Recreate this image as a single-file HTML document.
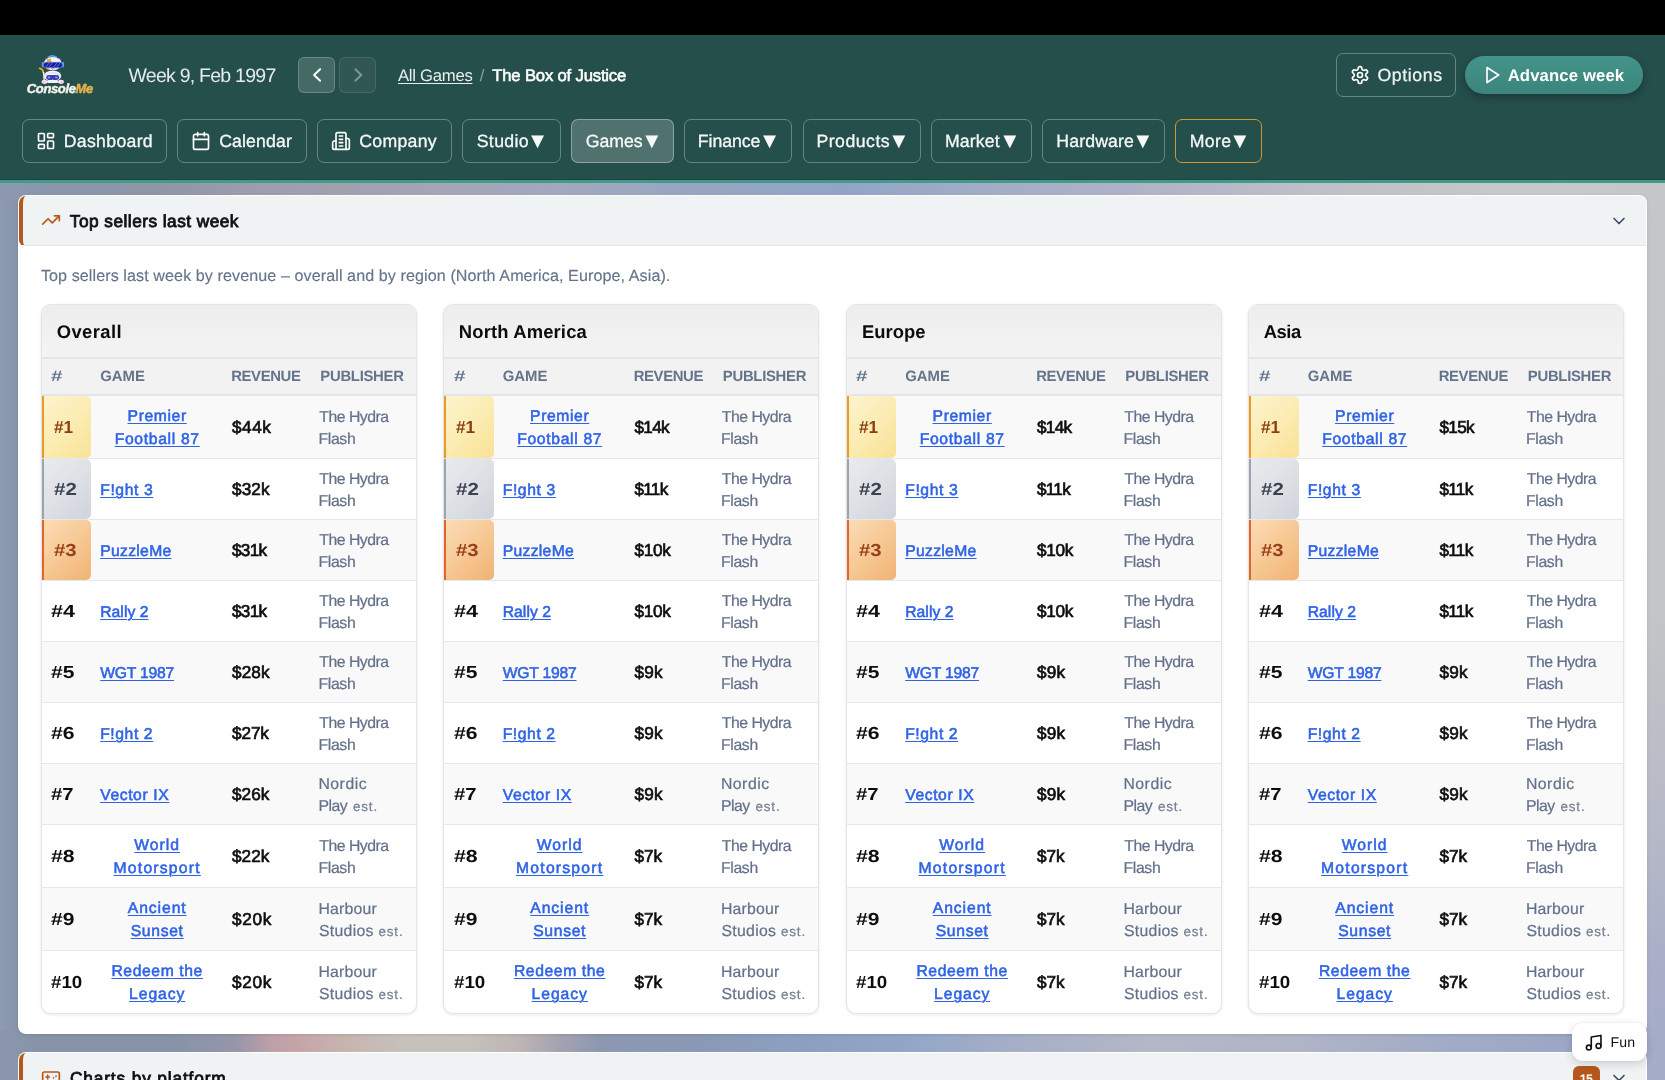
<!DOCTYPE html>
<html lang="en">
<head>
<meta charset="utf-8">
<title>ConsoleMe – Top sellers</title>
<style>
*{box-sizing:border-box}
html,body{margin:0;padding:0}
body{width:1665px;height:1080px;overflow:hidden;position:relative;font-family:"Liberation Sans",sans-serif;color:#111;background:#8d98ae;text-rendering:geometricPrecision}
.bg{position:absolute;left:0;top:0;width:1665px;height:1080px;
 background:
  linear-gradient(90deg,#8d9bb3 0,#8a97ad 8px,#8793a8 18px) 0 200px/18px 830px no-repeat,
  linear-gradient(180deg,#c5c6c7 0,#c4c5c7 420px,#b6b9c7 640px,#a8aec8 780px,#a5acc8 900px) 1647px 190px/18px 890px no-repeat,
  linear-gradient(90deg,#8c99b0 0,#8a96ab 40px,#8f96a7 160px,#9d9dad 260px,#a2a0af 340px,#a4a5b7 450px,#a2a8bd 560px,#97a5c2 700px,#93a5c6 850px,#a4adc6 1000px,#b1b3c6 1150px,#c0c1c8 1330px,#c6c7c8 1500px,#c5c6c7 1665px) 0 0/1665px 600px no-repeat,
  linear-gradient(90deg,#8996ad 0,#8693a8 40px,#8693a8 170px,#9596a9 235px,#bfa0a8 272px,#c6a5a9 300px,#c7b3ae 340px,#c6c1ba 400px,#c5c1bb 470px,#bdb5b4 520px,#a4a2b1 560px,#8c98b0 600px,#8a99b5 700px,#8d9fc0 800px,#92a5c7 900px,#a6afc7 1020px,#b4b7c6 1150px,#afb4c6 1300px,#a2abc6 1450px,#9ba7c5 1560px,#a4acc8 1665px) 0 600px/1665px 480px no-repeat}
.page{position:absolute;left:0;top:0;width:1665px;height:1080px;overflow:hidden;will-change:transform;transform:translateZ(0)}
.blackbar{position:absolute;left:0;top:0;width:1665px;height:35px;background:#000}
header{position:absolute;left:0;top:35px;width:1665px;height:148px;background:#254f4b;border-bottom:3px solid #419a8a;color:#fff;box-shadow:inset 0 -1px 0 rgba(0,0,0,.14)}
.abs{position:absolute;white-space:nowrap;line-height:20px}
.logo{position:absolute;left:0;top:0;width:120px;height:70px}
.logo svg{position:absolute}
.word{font-weight:700;font-style:italic;color:#f6f3ec;-webkit-text-stroke:.45px currentColor}
.word b{color:#e6b24c;font-weight:700}
.week{color:#e6ecec}
.nb{position:absolute;top:22px;width:37px;height:36px;border-radius:6px;border:1px solid rgba(255,255,255,.2);background:rgba(255,255,255,.15)}
.nb svg{position:absolute;left:6.6px;top:5.8px}
.nb.p{left:298px}
.nb.n{left:339px;background:rgba(255,255,255,.05);border-color:rgba(255,255,255,.1)}
.crumb a{text-decoration:underline;text-decoration-thickness:1px;text-underline-offset:2px;color:#e9eeed}
.sl{color:#8aa4a1}
.sb{-webkit-text-stroke:.55px currentColor}
.opt{position:absolute;left:1336px;top:18px;width:120px;height:44px;border:1px solid rgba(255,255,255,.3);border-radius:7px;color:#eef3f2}
.adv{position:absolute;left:1465px;top:21px;width:178px;height:38px;border-radius:19px;background:linear-gradient(180deg,#44938a,#3b857b);box-shadow:0 3px 8px rgba(0,0,0,.3);font-weight:700;color:#fff}
.navb{position:absolute;top:84px;height:44px;border:1px solid rgba(255,255,255,.3);border-radius:7px;color:#f6f9f8}
.navb.act{background:rgba(255,255,255,.2);border-color:rgba(255,255,255,.35)}
.navb.more{border-color:#cf9830}
.navb svg,.opt svg,.adv svg{position:absolute}
.nt{-webkit-text-stroke:.3px currentColor}
.tri{font-family:"Liberation Sans",sans-serif;line-height:0;letter-spacing:0;-webkit-text-stroke:0;position:relative;top:1px}
.card{position:absolute;left:18px;top:195px;width:1629px;height:839px;background:#fff;border:1px solid rgba(255,255,255,.8);border-radius:8px;box-shadow:0 1px 3px rgba(0,0,0,.10)}
.shead{position:absolute;left:0;top:0;width:1627px;height:50px;background:#f0f3f4;border-left:4px solid #b4591a;border-radius:7px 7px 0 6px;border-bottom:1px solid #e4e7ea}
.h2{margin:0;font-weight:400;color:#0d0f13;-webkit-text-stroke:.8px #0d0f13}
.desc{margin:0;color:#64748b;-webkit-text-stroke:.15px #64748b}
.tcard{position:absolute;top:108px;width:376px;height:710px;background:#fff;border:1px solid #e3e5ea;border-radius:10px;overflow:hidden;box-shadow:0 1px 3px rgba(16,24,40,.10)}
.tcard h3{margin:0;height:54px;position:relative;font-weight:700;background:linear-gradient(180deg,#ededed,#f4f4f4);border-bottom:2px solid #e4e6ea;color:#0b0c0f}
table{border-collapse:separate;border-spacing:0;width:374px;table-layout:fixed}
th{height:37px;background:#f2f2f2;font-weight:700;color:#64748b;text-align:left;padding:0;border-bottom:2px solid #e4e5ea;white-space:nowrap;position:relative}
td{height:61px;padding:0;border-bottom:1px solid #e5e7eb;vertical-align:top;position:relative;white-space:nowrap}
tr.two td{height:63px}
tbody tr:nth-child(odd) td{background:#f9f9fa}
tbody tr:last-child td{border-bottom:0;height:62px}
.c1{width:50px}
.c2{width:132px}
.c3{width:87px}
td.c1{font-weight:700;color:#0d0d0f}
td.c1 i{font-style:normal;display:block;transform-origin:0 50%}
td.c2{color:#2f63e6}
td.c2 a,td.c2 a span{text-decoration:underline;text-decoration-thickness:1.2px;text-underline-offset:2.2px;-webkit-text-stroke:.55px #2f63e6}
td.c2 a:not(.abs){text-decoration:none}

td.c3{font-weight:400;color:#0c0c0e;-webkit-text-stroke:.65px #0c0c0e}
td.c4{color:#64718a;-webkit-text-stroke:.22px #64718a}
td.c4 small{color:#7d8799}

tr.top td.c1 span{position:absolute;left:0;top:0;width:49.5px;height:100%;border-left:2.4px solid;border-radius:0 5px 5px 0}

tr.t1 td.c1 span{background:linear-gradient(135deg,#fdf4cd 0%,#fbebb0 55%,#fae196 100%);border-color:#eb9a28}
tr.t1 td.c1{color:#893d10}
tr.t2 td.c1 span{background:linear-gradient(135deg,#e9ebee 0%,#dcdfe4 55%,#d0d4db 100%);border-color:#9ca3af}
tr.t2 td.c1{color:#3b4350}
tr.t3 td.c1 span{background:linear-gradient(135deg,#fcdcb6 0%,#f6c690 55%,#f1b274 100%);border-color:#e2652c}
tr.t3 td.c1{color:#98401b}
.card2{position:absolute;left:18px;top:1052px;width:1629px;height:60px;background:#fff;border:1px solid rgba(255,255,255,.8);border-radius:8px}
.card2 .shead{border-radius:7px 7px 0 6px}
.badge{position:absolute;left:1573px;top:1066px;width:27px;height:25px;border-radius:6px;background:#b5581d;color:#fff;font-weight:700}
.fun{position:absolute;left:1572px;top:1023px;width:74.6px;height:38px;border-radius:11px;background:#fff;box-shadow:0 3px 10px rgba(15,23,42,.16),0 0 2px rgba(15,23,42,.08);color:#111}
.fun svg{position:absolute;left:12.3px;top:9.6px}
</style>
</head>
<body>
<div class="page">
<div class="bg"></div>
<div class="blackbar"></div>
<header>
<div class="logo">
<svg width="34" height="34" viewBox="36 53 34 34" style="left:36px;top:18px">
<path d="M48.3 57.3 Q52.3 54.4 56.3 57.3" fill="none" stroke="#4aa8ec" stroke-width="1.7" stroke-linecap="round"/>
<path d="M44.9 62.5 L45.2 57.6 L49.2 59.2z" fill="#7b55cc"/>
<path d="M60.9 62.5 L60.6 57.6 L56.6 59.2z" fill="#7b55cc"/>
<ellipse cx="52.8" cy="63.6" rx="9" ry="6.6" fill="#f7f5fc"/>
<path d="M46.6 59.6 L50.6 58.6 L51.4 61.9 L47 62.4z" fill="#f4a126"/>
<rect x="41.8" y="62" width="2.4" height="5.4" rx="1.1" fill="#58a4ea"/>
<rect x="61.6" y="62" width="2.4" height="5.4" rx="1.1" fill="#58a4ea"/>
<rect x="43.4" y="62.3" width="19" height="5.5" rx="2.6" fill="#1c1d96" stroke="#5d7fe6" stroke-width=".7"/>
<path d="M46.2 66.6 l2.6-3.2 M49.4 66.6 l2.6-3.2 M54 66.6 l2.6-3.2 M57.2 66.6 l2.6-3.2" stroke="#7478e8" stroke-width=".9" stroke-linecap="round"/>
<path d="M45.6 68.3 q1.8 1.8 3.4 .9 l-.4-1z" fill="#f4a126"/>
<path d="M51.5 68.2 l1.3 1.3 l1.3-1.3" fill="none" stroke="#2a2c7c" stroke-width=".6"/>
<path d="M39.6 68.3 Q42.6 68.6 43.4 72.2" fill="none" stroke="#f5a21f" stroke-width="1.7" stroke-linecap="round"/>
<path d="M43.5 72.4 Q44 76 44.2 79.4" fill="none" stroke="#f3f0fa" stroke-width="1.5" stroke-linecap="round"/>
<ellipse cx="52.6" cy="76" rx="8.6" ry="5.6" fill="#f5f3fb"/>
<path d="M44.6 75.5 q8-6 16 0" fill="none" stroke="#c9c6ea" stroke-width=".6"/>
<rect x="46.2" y="75" width="13" height="4.9" rx="2.3" fill="#3c40b2"/>
<circle cx="49" cy="77.4" r="1.1" fill="#8f93ea"/><circle cx="56.4" cy="77.4" r="1.1" fill="#8f93ea"/>
<path d="M51.6 80.2 q1.1-1.2 2.2 0z" fill="#f5f3fb"/>
<ellipse cx="44.5" cy="81.8" rx="2.9" ry="2.1" fill="#f8e4f0"/>
<ellipse cx="61" cy="81.8" rx="2.9" ry="2.1" fill="#f8e4f0"/>
<circle cx="43.9" cy="82" r=".8" fill="#f08fbb"/><circle cx="61.6" cy="82" r=".8" fill="#f08fbb"/>
<rect x="47" y="80.4" width="11.4" height="2.6" rx="1.3" fill="#f5f3fb"/>
</svg>

<span class="abs word" style="left:26.75px;top:44px;font-size:13.0px;letter-spacing:-0.35px">Console<b>Me</b></span>
</div>
<span class="abs week" style="left:128.5px;top:31px;font-size:19.5px;letter-spacing:-0.75px;">Week 9, Feb 1997</span>
<div class="nb p"><svg width="22" height="22" viewBox="0 0 22 22" fill="none" stroke="#fff" stroke-width="2" stroke-linecap="round" stroke-linejoin="round"><path d="M14.1 5.3 L8.1 11 L14.1 16.7"/></svg></div>
<div class="nb n"><svg width="22" height="22" viewBox="0 0 22 22" fill="none" stroke="#7c9996" stroke-width="1.9" stroke-linecap="round" stroke-linejoin="round"><path d="M8.3 5.3 L14.3 11 L8.3 16.7"/></svg></div>
<nav class="crumb">
<a class="abs" style="left:398px;top:31px;font-size:16.7px;letter-spacing:-0.28px;">All Games</a>
<span class="abs sl" style="left:479.8px;top:31px;font-size:16.7px;">/</span>
<b class="abs sb" style="left:492.28px;top:31px;font-size:16.7px;letter-spacing:-0.19px;font-weight:400;">The Box of Justice</b>
</nav>
<div class="opt">
<svg style="left:13px;top:11px" width="20" height="20" viewBox="0 0 24 24" fill="none" stroke="#fff" stroke-width="2" stroke-linecap="round" stroke-linejoin="round"><path d="M12.22 2h-.44a2 2 0 0 0-2 2v.18a2 2 0 0 1-1 1.73l-.43.25a2 2 0 0 1-2 0l-.15-.08a2 2 0 0 0-2.73.73l-.22.38a2 2 0 0 0 .73 2.73l.15.1a2 2 0 0 1 1 1.72v.51a2 2 0 0 1-1 1.74l-.15.09a2 2 0 0 0-.73 2.73l.22.38a2 2 0 0 0 2.73.73l.15-.08a2 2 0 0 1 2 0l.43.25a2 2 0 0 1 1 1.73V20a2 2 0 0 0 2 2h.44a2 2 0 0 0 2-2v-.18a2 2 0 0 1 1-1.73l.43-.25a2 2 0 0 1 2 0l.15.08a2 2 0 0 0 2.73-.73l.22-.39a2 2 0 0 0-.73-2.73l-.15-.08a2 2 0 0 1-1-1.74v-.5a2 2 0 0 1 1-1.74l.15-.09a2 2 0 0 0 .73-2.73l-.22-.38a2 2 0 0 0-2.73-.73l-.15.08a2 2 0 0 1-2 0l-.43-.25a2 2 0 0 1-1-1.73V4a2 2 0 0 0-2-2z"/><circle cx="12" cy="12" r="3"/></svg>
<span class="abs nt" style="left:40.4px;top:11px;font-size:17.7px;letter-spacing:0.61px;">Options</span>
</div>
<div class="adv">
<svg style="left:17.4px;top:8.8px" width="20" height="20" viewBox="0 0 24 24" fill="none" stroke="#fff" stroke-width="2" stroke-linecap="round" stroke-linejoin="round"><path d="M6 3l14 9-14 9z"/></svg>
<span class="abs" style="left:42.68px;top:10px;font-size:16.7px;letter-spacing:0.13px;">Advance week</span>
</div>
<div class="nav">
<div class="navb" style="left:22px;width:145px">
<svg style="left:13.3px;top:10.8px" width="20" height="20" viewBox="0 0 24 24" fill="none" stroke="#fff" stroke-width="2" stroke-linecap="round" stroke-linejoin="round"><rect x="3" y="3" width="7" height="9" rx="1"/><rect x="14" y="3" width="7" height="5" rx="1"/><rect x="14" y="12" width="7" height="9" rx="1"/><rect x="3" y="16" width="7" height="5" rx="1"/></svg>
<span class="abs nt" style="left:40.78px;top:11px;font-size:17.7px;letter-spacing:0.3px;">Dashboard</span>
</div>
<div class="navb" style="left:177px;width:130px">
<svg style="left:13.3px;top:10.8px" width="20" height="20" viewBox="0 0 24 24" fill="none" stroke="#fff" stroke-width="2" stroke-linecap="round" stroke-linejoin="round"><path d="M8 2v4M16 2v4M3 10h18"/><rect x="3" y="4" width="18" height="18" rx="2"/></svg>
<span class="abs nt" style="left:41.22px;top:11px;font-size:17.7px;letter-spacing:0.11px;">Calendar</span>
</div>
<div class="navb" style="left:317px;width:135px">
<svg style="left:13.3px;top:10.8px" width="20" height="20" viewBox="0 0 24 24" fill="none" stroke="#fff" stroke-width="2" stroke-linecap="round" stroke-linejoin="round"><path d="M6 22V4a2 2 0 0 1 2-2h8a2 2 0 0 1 2 2v18z"/><path d="M6 12H4a2 2 0 0 0-2 2v6a2 2 0 0 0 2 2h2M18 9h2a2 2 0 0 1 2 2v9a2 2 0 0 1-2 2h-2M10 6h4M10 10h4M10 14h4M10 18h4"/></svg>
<span class="abs nt" style="left:41.22px;top:11px;font-size:17.7px;letter-spacing:0.29px;">Company</span>
</div>
<div class="navb" style="left:462px;width:99px">
<span class="abs nt" style="left:13.7px;top:11px;font-size:17.7px;letter-spacing:0.37px;">Studio<span class="tri" style="font-size:21.8px;margin-left:-2.25px">▼</span></span>
</div>
<div class="navb act" style="left:571px;width:103px">
<span class="abs nt" style="left:13.72px;top:11px;font-size:17.7px;letter-spacing:-0.02px;">Games<span class="tri" style="font-size:21.8px;margin-left:-1.74px">▼</span></span>
</div>
<div class="navb" style="left:684px;width:108px">
<span class="abs nt" style="left:12.78px;top:11px;font-size:17.7px;letter-spacing:-0.04px;">Finance<span class="tri" style="font-size:21.8px;margin-left:-1.78px">▼</span></span>
</div>
<div class="navb" style="left:803px;width:118px">
<span class="abs nt" style="left:12.38px;top:11px;font-size:17.7px;letter-spacing:0.5px;">Products<span class="tri" style="font-size:21.8px;margin-left:-2.31px">▼</span></span>
</div>
<div class="navb" style="left:931px;width:101px">
<span class="abs nt" style="left:12.98px;top:11px;font-size:17.7px;letter-spacing:0.13px;">Market<span class="tri" style="font-size:21.8px;margin-left:-0.91px">▼</span></span>
</div>
<div class="navb" style="left:1042px;width:123px">
<span class="abs nt" style="left:13.28px;top:11px;font-size:17.7px;letter-spacing:0.14px;">Hardware<span class="tri" style="font-size:21.8px;margin-left:-2.01px">▼</span></span>
</div>
<div class="navb more" style="left:1175px;width:87px">
<span class="abs nt" style="left:13.78px;top:11px;font-size:17.7px;letter-spacing:0.32px;">More<span class="tri" style="font-size:21.8px;margin-left:-2.34px">▼</span></span>
</div>
</div>
</header>
<main class="card">
<div class="shead">
<svg class="abs" style="left:17.9px;top:14px" width="20" height="20" viewBox="0 0 24 24" fill="none" stroke="#b4591a" stroke-width="2" stroke-linecap="round" stroke-linejoin="round"><path d="M22 7l-8.5 8.5-5-5L2 17"/><path d="M16 7h6v6"/></svg>
<h2 class="abs h2" style="left:46.87px;top:15px;font-size:17.3px;letter-spacing:0.46px;">Top sellers last week</h2>
<svg class="abs" style="left:1586px;top:14.6px" width="20" height="20" viewBox="0 0 24 24" fill="none" stroke="#3f4a63" stroke-width="2" stroke-linecap="round" stroke-linejoin="round"><path d="M6 9l6 6 6-6"/></svg>
</div>
<p class="abs desc" style="left:21.9px;top:70px;font-size:16.1px;letter-spacing:0.09px;">Top sellers last week by revenue – overall and by region (North America, Europe, Asia).</p>
<section class="tcard" style="left:21.8px">
<h3><span class="abs" style="left:14.96px;top:17px;font-size:18.4px;letter-spacing:0.41px;">Overall</span></h3>
<table><thead><tr>
<th class="c1"><span class="abs" style="left:9.58px;top:8px;font-size:14.9px;transform:scaleX(1.38);transform-origin:0 50%;">#</span></th>
<th class="c2"><span class="abs" style="left:8.5px;top:8px;font-size:14.9px;letter-spacing:-0.03px;">GAME</span></th>
<th class="c3"><span class="abs" style="left:7.43px;top:8px;font-size:14.9px;letter-spacing:-0.39px;">REVENUE</span></th>
<th class="c4"><span class="abs" style="left:9.53px;top:8px;font-size:14.9px;letter-spacing:-0.3px;">PUBLISHER</span></th>
</tr></thead><tbody>
<tr class="two top t1">
<td class="c1"><span></span><i class="abs" style="left:12.04px;top:21px;font-size:17.5px;transform:scaleX(0.98);letter-spacing:0px">#1</i></td>
<td class="c2"><a><span class="abs" style="left:35.75px;top:11px;font-size:15.7px;letter-spacing:0.62px;">Premier</span> <span class="abs" style="left:22.9px;top:34px;font-size:15.7px;letter-spacing:0.67px;">Football 87</span></a></td>
<td class="c3"><span class="abs" style="left:8.23px;top:21px;font-size:17.2px;letter-spacing:0.52px;">$44k</span></td>
<td class="c4"><span class="abs" style="left:8.5px;top:12px;font-size:15.8px;letter-spacing:-0.5px;">The Hydra</span> <span class="abs" style="left:7.64px;top:34px;font-size:15.8px;letter-spacing:-0.34px;">Flash</span></td>
</tr>
<tr class="top t2">
<td class="c1"><span></span><i class="abs" style="left:11.99px;top:20px;font-size:17.5px;transform:scaleX(1.17);letter-spacing:0px">#2</i></td>
<td class="c2"><a class="abs" style="left:8.4px;top:22px;font-size:15.7px;letter-spacing:0.62px;">F!ght 3</a></td>
<td class="c3"><span class="abs" style="left:8.23px;top:20px;font-size:17.2px;letter-spacing:0.08px;">$32k</span></td>
<td class="c4"><span class="abs" style="left:8.5px;top:11px;font-size:15.8px;letter-spacing:-0.5px;">The Hydra</span> <span class="abs" style="left:7.64px;top:33px;font-size:15.8px;letter-spacing:-0.34px;">Flash</span></td>
</tr>
<tr class="top t3">
<td class="c1"><span></span><i class="abs" style="left:11.99px;top:20px;font-size:17.5px;transform:scaleX(1.16);letter-spacing:0px">#3</i></td>
<td class="c2"><a class="abs" style="left:8.4px;top:22px;font-size:15.7px;letter-spacing:0.31px;">PuzzleMe</a></td>
<td class="c3"><span class="abs" style="left:8.23px;top:20px;font-size:17.2px;letter-spacing:-0.75px;">$31k</span></td>
<td class="c4"><span class="abs" style="left:8.5px;top:11px;font-size:15.8px;letter-spacing:-0.5px;">The Hydra</span> <span class="abs" style="left:7.64px;top:33px;font-size:15.8px;letter-spacing:-0.34px;">Flash</span></td>
</tr>
<tr>
<td class="c1"><i class="abs" style="left:9.48px;top:20px;font-size:17.5px;transform:scaleX(1.23);letter-spacing:0px">#4</i></td>
<td class="c2"><a class="abs" style="left:8.4px;top:22px;font-size:15.7px;letter-spacing:0.06px;">Rally 2</a></td>
<td class="c3"><span class="abs" style="left:8.23px;top:20px;font-size:17.2px;letter-spacing:-0.75px;">$31k</span></td>
<td class="c4"><span class="abs" style="left:8.5px;top:11px;font-size:15.8px;letter-spacing:-0.5px;">The Hydra</span> <span class="abs" style="left:7.64px;top:33px;font-size:15.8px;letter-spacing:-0.34px;">Flash</span></td>
</tr>
<tr>
<td class="c1"><i class="abs" style="left:9.49px;top:20px;font-size:17.5px;transform:scaleX(1.2);letter-spacing:0px">#5</i></td>
<td class="c2"><a class="abs" style="left:8.4px;top:22px;font-size:15.7px;letter-spacing:-0.22px;">WGT 1987</a></td>
<td class="c3"><span class="abs" style="left:8.23px;top:20px;font-size:17.2px;letter-spacing:0.12px;">$28k</span></td>
<td class="c4"><span class="abs" style="left:8.5px;top:11px;font-size:15.8px;letter-spacing:-0.5px;">The Hydra</span> <span class="abs" style="left:7.64px;top:33px;font-size:15.8px;letter-spacing:-0.34px;">Flash</span></td>
</tr>
<tr>
<td class="c1"><i class="abs" style="left:9.48px;top:20px;font-size:17.5px;transform:scaleX(1.21);letter-spacing:0px">#6</i></td>
<td class="c2"><a class="abs" style="left:8.4px;top:22px;font-size:15.7px;letter-spacing:0.59px;">F!ght 2</a></td>
<td class="c3"><span class="abs" style="left:8.23px;top:20px;font-size:17.2px;letter-spacing:-0.12px;">$27k</span></td>
<td class="c4"><span class="abs" style="left:8.5px;top:11px;font-size:15.8px;letter-spacing:-0.5px;">The Hydra</span> <span class="abs" style="left:7.64px;top:33px;font-size:15.8px;letter-spacing:-0.34px;">Flash</span></td>
</tr>
<tr>
<td class="c1"><i class="abs" style="left:9.49px;top:20px;font-size:17.5px;transform:scaleX(1.16);letter-spacing:0px">#7</i></td>
<td class="c2"><a class="abs" style="left:8.4px;top:22px;font-size:15.7px;letter-spacing:0.6px;">Vector IX</a></td>
<td class="c3"><span class="abs" style="left:8.23px;top:20px;font-size:17.2px;letter-spacing:0.02px;">$26k</span></td>
<td class="c4"><span class="abs" style="left:7.64px;top:11px;font-size:15.8px;letter-spacing:0.5px;">Nordic</span> <span class="abs" style="left:7.64px;top:33px;font-size:15.8px;letter-spacing:-0.5px;">Play</span> <small class="abs" style="left:42.1px;top:33px;font-size:13.4px;letter-spacing:0.88px;">est.</small></td>
</tr>
<tr class="two">
<td class="c1"><i class="abs" style="left:9.48px;top:21px;font-size:17.5px;transform:scaleX(1.22);letter-spacing:0px">#8</i></td>
<td class="c2"><a><span class="abs" style="left:42.55px;top:11px;font-size:15.7px;letter-spacing:1px;">World</span> <span class="abs" style="left:21.75px;top:34px;font-size:15.7px;letter-spacing:1.23px;">Motorsport</span></a></td>
<td class="c3"><span class="abs" style="left:8.23px;top:21px;font-size:17.2px;letter-spacing:0.02px;">$22k</span></td>
<td class="c4"><span class="abs" style="left:8.5px;top:12px;font-size:15.8px;letter-spacing:-0.5px;">The Hydra</span> <span class="abs" style="left:7.64px;top:34px;font-size:15.8px;letter-spacing:-0.34px;">Flash</span></td>
</tr>
<tr class="two">
<td class="c1"><i class="abs" style="left:9.49px;top:21px;font-size:17.5px;transform:scaleX(1.2);letter-spacing:0px">#9</i></td>
<td class="c2"><a><span class="abs" style="left:36px;top:11px;font-size:15.7px;letter-spacing:0.92px;">Ancient</span> <span class="abs" style="left:38.9px;top:34px;font-size:15.7px;letter-spacing:0.69px;">Sunset</span></a></td>
<td class="c3"><span class="abs" style="left:8.23px;top:21px;font-size:17.2px;letter-spacing:0.65px;">$20k</span></td>
<td class="c4"><span class="abs" style="left:7.64px;top:12px;font-size:15.8px;letter-spacing:0.21px;">Harbour</span> <span class="abs" style="left:8.19px;top:34px;font-size:15.8px;letter-spacing:0.3px;">Studios</span> <small class="abs" style="left:67.6px;top:34px;font-size:13.4px;letter-spacing:0.88px;">est.</small></td>
</tr>
<tr class="two">
<td class="c1"><i class="abs" style="left:9.52px;top:21px;font-size:17.5px;transform:scaleX(1.07);letter-spacing:0px">#10</i></td>
<td class="c2"><a><span class="abs" style="left:19.6px;top:11px;font-size:15.7px;letter-spacing:0.61px;">Redeem the</span> <span class="abs" style="left:37.25px;top:34px;font-size:15.7px;letter-spacing:0.95px;">Legacy</span></a></td>
<td class="c3"><span class="abs" style="left:8.23px;top:21px;font-size:17.2px;letter-spacing:0.65px;">$20k</span></td>
<td class="c4"><span class="abs" style="left:7.64px;top:12px;font-size:15.8px;letter-spacing:0.21px;">Harbour</span> <span class="abs" style="left:8.19px;top:34px;font-size:15.8px;letter-spacing:0.3px;">Studios</span> <small class="abs" style="left:67.6px;top:34px;font-size:13.4px;letter-spacing:0.88px;">est.</small></td>
</tr>
</tbody></table></section>
<section class="tcard" style="left:424.3px">
<h3><span class="abs" style="left:14.5px;top:17px;font-size:18.4px;letter-spacing:0.16px;">North America</span></h3>
<table><thead><tr>
<th class="c1"><span class="abs" style="left:9.58px;top:8px;font-size:14.9px;transform:scaleX(1.38);transform-origin:0 50%;">#</span></th>
<th class="c2"><span class="abs" style="left:8.5px;top:8px;font-size:14.9px;letter-spacing:-0.03px;">GAME</span></th>
<th class="c3"><span class="abs" style="left:7.43px;top:8px;font-size:14.9px;letter-spacing:-0.39px;">REVENUE</span></th>
<th class="c4"><span class="abs" style="left:9.53px;top:8px;font-size:14.9px;letter-spacing:-0.3px;">PUBLISHER</span></th>
</tr></thead><tbody>
<tr class="two top t1">
<td class="c1"><span></span><i class="abs" style="left:12.04px;top:21px;font-size:17.5px;transform:scaleX(0.98);letter-spacing:0px">#1</i></td>
<td class="c2"><a><span class="abs" style="left:35.75px;top:11px;font-size:15.7px;letter-spacing:0.62px;">Premier</span> <span class="abs" style="left:22.9px;top:34px;font-size:15.7px;letter-spacing:0.67px;">Football 87</span></a></td>
<td class="c3"><span class="abs" style="left:8.23px;top:21px;font-size:17.2px;letter-spacing:-0.7px;">$14k</span></td>
<td class="c4"><span class="abs" style="left:8.5px;top:12px;font-size:15.8px;letter-spacing:-0.5px;">The Hydra</span> <span class="abs" style="left:7.64px;top:34px;font-size:15.8px;letter-spacing:-0.34px;">Flash</span></td>
</tr>
<tr class="top t2">
<td class="c1"><span></span><i class="abs" style="left:11.99px;top:20px;font-size:17.5px;transform:scaleX(1.17);letter-spacing:0px">#2</i></td>
<td class="c2"><a class="abs" style="left:8.4px;top:22px;font-size:15.7px;letter-spacing:0.62px;">F!ght 3</a></td>
<td class="c3"><span class="abs" style="left:8.23px;top:20px;font-size:17.2px;letter-spacing:-0.75px;">$11k</span></td>
<td class="c4"><span class="abs" style="left:8.5px;top:11px;font-size:15.8px;letter-spacing:-0.5px;">The Hydra</span> <span class="abs" style="left:7.64px;top:33px;font-size:15.8px;letter-spacing:-0.34px;">Flash</span></td>
</tr>
<tr class="top t3">
<td class="c1"><span></span><i class="abs" style="left:11.99px;top:20px;font-size:17.5px;transform:scaleX(1.16);letter-spacing:0px">#3</i></td>
<td class="c2"><a class="abs" style="left:8.4px;top:22px;font-size:15.7px;letter-spacing:0.31px;">PuzzleMe</a></td>
<td class="c3"><span class="abs" style="left:8.23px;top:20px;font-size:17.2px;letter-spacing:-0.32px;">$10k</span></td>
<td class="c4"><span class="abs" style="left:8.5px;top:11px;font-size:15.8px;letter-spacing:-0.5px;">The Hydra</span> <span class="abs" style="left:7.64px;top:33px;font-size:15.8px;letter-spacing:-0.34px;">Flash</span></td>
</tr>
<tr>
<td class="c1"><i class="abs" style="left:9.48px;top:20px;font-size:17.5px;transform:scaleX(1.23);letter-spacing:0px">#4</i></td>
<td class="c2"><a class="abs" style="left:8.4px;top:22px;font-size:15.7px;letter-spacing:0.06px;">Rally 2</a></td>
<td class="c3"><span class="abs" style="left:8.23px;top:20px;font-size:17.2px;letter-spacing:-0.32px;">$10k</span></td>
<td class="c4"><span class="abs" style="left:8.5px;top:11px;font-size:15.8px;letter-spacing:-0.5px;">The Hydra</span> <span class="abs" style="left:7.64px;top:33px;font-size:15.8px;letter-spacing:-0.34px;">Flash</span></td>
</tr>
<tr>
<td class="c1"><i class="abs" style="left:9.49px;top:20px;font-size:17.5px;transform:scaleX(1.2);letter-spacing:0px">#5</i></td>
<td class="c2"><a class="abs" style="left:8.4px;top:22px;font-size:15.7px;letter-spacing:-0.22px;">WGT 1987</a></td>
<td class="c3"><span class="abs" style="left:8.23px;top:20px;font-size:17.2px;letter-spacing:0.24px;">$9k</span></td>
<td class="c4"><span class="abs" style="left:8.5px;top:11px;font-size:15.8px;letter-spacing:-0.5px;">The Hydra</span> <span class="abs" style="left:7.64px;top:33px;font-size:15.8px;letter-spacing:-0.34px;">Flash</span></td>
</tr>
<tr>
<td class="c1"><i class="abs" style="left:9.48px;top:20px;font-size:17.5px;transform:scaleX(1.21);letter-spacing:0px">#6</i></td>
<td class="c2"><a class="abs" style="left:8.4px;top:22px;font-size:15.7px;letter-spacing:0.59px;">F!ght 2</a></td>
<td class="c3"><span class="abs" style="left:8.23px;top:20px;font-size:17.2px;letter-spacing:0.24px;">$9k</span></td>
<td class="c4"><span class="abs" style="left:8.5px;top:11px;font-size:15.8px;letter-spacing:-0.5px;">The Hydra</span> <span class="abs" style="left:7.64px;top:33px;font-size:15.8px;letter-spacing:-0.34px;">Flash</span></td>
</tr>
<tr>
<td class="c1"><i class="abs" style="left:9.49px;top:20px;font-size:17.5px;transform:scaleX(1.16);letter-spacing:0px">#7</i></td>
<td class="c2"><a class="abs" style="left:8.4px;top:22px;font-size:15.7px;letter-spacing:0.6px;">Vector IX</a></td>
<td class="c3"><span class="abs" style="left:8.23px;top:20px;font-size:17.2px;letter-spacing:0.24px;">$9k</span></td>
<td class="c4"><span class="abs" style="left:7.64px;top:11px;font-size:15.8px;letter-spacing:0.5px;">Nordic</span> <span class="abs" style="left:7.64px;top:33px;font-size:15.8px;letter-spacing:-0.5px;">Play</span> <small class="abs" style="left:42.1px;top:33px;font-size:13.4px;letter-spacing:0.88px;">est.</small></td>
</tr>
<tr class="two">
<td class="c1"><i class="abs" style="left:9.48px;top:21px;font-size:17.5px;transform:scaleX(1.22);letter-spacing:0px">#8</i></td>
<td class="c2"><a><span class="abs" style="left:42.55px;top:11px;font-size:15.7px;letter-spacing:1px;">World</span> <span class="abs" style="left:21.75px;top:34px;font-size:15.7px;letter-spacing:1.23px;">Motorsport</span></a></td>
<td class="c3"><span class="abs" style="left:8.23px;top:21px;font-size:17.2px;letter-spacing:-0.01px;">$7k</span></td>
<td class="c4"><span class="abs" style="left:8.5px;top:12px;font-size:15.8px;letter-spacing:-0.5px;">The Hydra</span> <span class="abs" style="left:7.64px;top:34px;font-size:15.8px;letter-spacing:-0.34px;">Flash</span></td>
</tr>
<tr class="two">
<td class="c1"><i class="abs" style="left:9.49px;top:21px;font-size:17.5px;transform:scaleX(1.2);letter-spacing:0px">#9</i></td>
<td class="c2"><a><span class="abs" style="left:36px;top:11px;font-size:15.7px;letter-spacing:0.92px;">Ancient</span> <span class="abs" style="left:38.9px;top:34px;font-size:15.7px;letter-spacing:0.69px;">Sunset</span></a></td>
<td class="c3"><span class="abs" style="left:8.23px;top:21px;font-size:17.2px;letter-spacing:-0.01px;">$7k</span></td>
<td class="c4"><span class="abs" style="left:7.64px;top:12px;font-size:15.8px;letter-spacing:0.21px;">Harbour</span> <span class="abs" style="left:8.19px;top:34px;font-size:15.8px;letter-spacing:0.3px;">Studios</span> <small class="abs" style="left:67.6px;top:34px;font-size:13.4px;letter-spacing:0.88px;">est.</small></td>
</tr>
<tr class="two">
<td class="c1"><i class="abs" style="left:9.52px;top:21px;font-size:17.5px;transform:scaleX(1.07);letter-spacing:0px">#10</i></td>
<td class="c2"><a><span class="abs" style="left:19.6px;top:11px;font-size:15.7px;letter-spacing:0.61px;">Redeem the</span> <span class="abs" style="left:37.25px;top:34px;font-size:15.7px;letter-spacing:0.95px;">Legacy</span></a></td>
<td class="c3"><span class="abs" style="left:8.23px;top:21px;font-size:17.2px;letter-spacing:-0.01px;">$7k</span></td>
<td class="c4"><span class="abs" style="left:7.64px;top:12px;font-size:15.8px;letter-spacing:0.21px;">Harbour</span> <span class="abs" style="left:8.19px;top:34px;font-size:15.8px;letter-spacing:0.3px;">Studios</span> <small class="abs" style="left:67.6px;top:34px;font-size:13.4px;letter-spacing:0.88px;">est.</small></td>
</tr>
</tbody></table></section>
<section class="tcard" style="left:826.8px">
<h3><span class="abs" style="left:15.1px;top:17px;font-size:18.4px;letter-spacing:0.07px;">Europe</span></h3>
<table><thead><tr>
<th class="c1"><span class="abs" style="left:9.58px;top:8px;font-size:14.9px;transform:scaleX(1.38);transform-origin:0 50%;">#</span></th>
<th class="c2"><span class="abs" style="left:8.5px;top:8px;font-size:14.9px;letter-spacing:-0.03px;">GAME</span></th>
<th class="c3"><span class="abs" style="left:7.43px;top:8px;font-size:14.9px;letter-spacing:-0.39px;">REVENUE</span></th>
<th class="c4"><span class="abs" style="left:9.53px;top:8px;font-size:14.9px;letter-spacing:-0.3px;">PUBLISHER</span></th>
</tr></thead><tbody>
<tr class="two top t1">
<td class="c1"><span></span><i class="abs" style="left:12.04px;top:21px;font-size:17.5px;transform:scaleX(0.98);letter-spacing:0px">#1</i></td>
<td class="c2"><a><span class="abs" style="left:35.75px;top:11px;font-size:15.7px;letter-spacing:0.62px;">Premier</span> <span class="abs" style="left:22.9px;top:34px;font-size:15.7px;letter-spacing:0.67px;">Football 87</span></a></td>
<td class="c3"><span class="abs" style="left:8.23px;top:21px;font-size:17.2px;letter-spacing:-0.7px;">$14k</span></td>
<td class="c4"><span class="abs" style="left:8.5px;top:12px;font-size:15.8px;letter-spacing:-0.5px;">The Hydra</span> <span class="abs" style="left:7.64px;top:34px;font-size:15.8px;letter-spacing:-0.34px;">Flash</span></td>
</tr>
<tr class="top t2">
<td class="c1"><span></span><i class="abs" style="left:11.99px;top:20px;font-size:17.5px;transform:scaleX(1.17);letter-spacing:0px">#2</i></td>
<td class="c2"><a class="abs" style="left:8.4px;top:22px;font-size:15.7px;letter-spacing:0.62px;">F!ght 3</a></td>
<td class="c3"><span class="abs" style="left:8.23px;top:20px;font-size:17.2px;letter-spacing:-0.75px;">$11k</span></td>
<td class="c4"><span class="abs" style="left:8.5px;top:11px;font-size:15.8px;letter-spacing:-0.5px;">The Hydra</span> <span class="abs" style="left:7.64px;top:33px;font-size:15.8px;letter-spacing:-0.34px;">Flash</span></td>
</tr>
<tr class="top t3">
<td class="c1"><span></span><i class="abs" style="left:11.99px;top:20px;font-size:17.5px;transform:scaleX(1.16);letter-spacing:0px">#3</i></td>
<td class="c2"><a class="abs" style="left:8.4px;top:22px;font-size:15.7px;letter-spacing:0.31px;">PuzzleMe</a></td>
<td class="c3"><span class="abs" style="left:8.23px;top:20px;font-size:17.2px;letter-spacing:-0.32px;">$10k</span></td>
<td class="c4"><span class="abs" style="left:8.5px;top:11px;font-size:15.8px;letter-spacing:-0.5px;">The Hydra</span> <span class="abs" style="left:7.64px;top:33px;font-size:15.8px;letter-spacing:-0.34px;">Flash</span></td>
</tr>
<tr>
<td class="c1"><i class="abs" style="left:9.48px;top:20px;font-size:17.5px;transform:scaleX(1.23);letter-spacing:0px">#4</i></td>
<td class="c2"><a class="abs" style="left:8.4px;top:22px;font-size:15.7px;letter-spacing:0.06px;">Rally 2</a></td>
<td class="c3"><span class="abs" style="left:8.23px;top:20px;font-size:17.2px;letter-spacing:-0.32px;">$10k</span></td>
<td class="c4"><span class="abs" style="left:8.5px;top:11px;font-size:15.8px;letter-spacing:-0.5px;">The Hydra</span> <span class="abs" style="left:7.64px;top:33px;font-size:15.8px;letter-spacing:-0.34px;">Flash</span></td>
</tr>
<tr>
<td class="c1"><i class="abs" style="left:9.49px;top:20px;font-size:17.5px;transform:scaleX(1.2);letter-spacing:0px">#5</i></td>
<td class="c2"><a class="abs" style="left:8.4px;top:22px;font-size:15.7px;letter-spacing:-0.22px;">WGT 1987</a></td>
<td class="c3"><span class="abs" style="left:8.23px;top:20px;font-size:17.2px;letter-spacing:0.24px;">$9k</span></td>
<td class="c4"><span class="abs" style="left:8.5px;top:11px;font-size:15.8px;letter-spacing:-0.5px;">The Hydra</span> <span class="abs" style="left:7.64px;top:33px;font-size:15.8px;letter-spacing:-0.34px;">Flash</span></td>
</tr>
<tr>
<td class="c1"><i class="abs" style="left:9.48px;top:20px;font-size:17.5px;transform:scaleX(1.21);letter-spacing:0px">#6</i></td>
<td class="c2"><a class="abs" style="left:8.4px;top:22px;font-size:15.7px;letter-spacing:0.59px;">F!ght 2</a></td>
<td class="c3"><span class="abs" style="left:8.23px;top:20px;font-size:17.2px;letter-spacing:0.24px;">$9k</span></td>
<td class="c4"><span class="abs" style="left:8.5px;top:11px;font-size:15.8px;letter-spacing:-0.5px;">The Hydra</span> <span class="abs" style="left:7.64px;top:33px;font-size:15.8px;letter-spacing:-0.34px;">Flash</span></td>
</tr>
<tr>
<td class="c1"><i class="abs" style="left:9.49px;top:20px;font-size:17.5px;transform:scaleX(1.16);letter-spacing:0px">#7</i></td>
<td class="c2"><a class="abs" style="left:8.4px;top:22px;font-size:15.7px;letter-spacing:0.6px;">Vector IX</a></td>
<td class="c3"><span class="abs" style="left:8.23px;top:20px;font-size:17.2px;letter-spacing:0.24px;">$9k</span></td>
<td class="c4"><span class="abs" style="left:7.64px;top:11px;font-size:15.8px;letter-spacing:0.5px;">Nordic</span> <span class="abs" style="left:7.64px;top:33px;font-size:15.8px;letter-spacing:-0.5px;">Play</span> <small class="abs" style="left:42.1px;top:33px;font-size:13.4px;letter-spacing:0.88px;">est.</small></td>
</tr>
<tr class="two">
<td class="c1"><i class="abs" style="left:9.48px;top:21px;font-size:17.5px;transform:scaleX(1.22);letter-spacing:0px">#8</i></td>
<td class="c2"><a><span class="abs" style="left:42.55px;top:11px;font-size:15.7px;letter-spacing:1px;">World</span> <span class="abs" style="left:21.75px;top:34px;font-size:15.7px;letter-spacing:1.23px;">Motorsport</span></a></td>
<td class="c3"><span class="abs" style="left:8.23px;top:21px;font-size:17.2px;letter-spacing:-0.01px;">$7k</span></td>
<td class="c4"><span class="abs" style="left:8.5px;top:12px;font-size:15.8px;letter-spacing:-0.5px;">The Hydra</span> <span class="abs" style="left:7.64px;top:34px;font-size:15.8px;letter-spacing:-0.34px;">Flash</span></td>
</tr>
<tr class="two">
<td class="c1"><i class="abs" style="left:9.49px;top:21px;font-size:17.5px;transform:scaleX(1.2);letter-spacing:0px">#9</i></td>
<td class="c2"><a><span class="abs" style="left:36px;top:11px;font-size:15.7px;letter-spacing:0.92px;">Ancient</span> <span class="abs" style="left:38.9px;top:34px;font-size:15.7px;letter-spacing:0.69px;">Sunset</span></a></td>
<td class="c3"><span class="abs" style="left:8.23px;top:21px;font-size:17.2px;letter-spacing:-0.01px;">$7k</span></td>
<td class="c4"><span class="abs" style="left:7.64px;top:12px;font-size:15.8px;letter-spacing:0.21px;">Harbour</span> <span class="abs" style="left:8.19px;top:34px;font-size:15.8px;letter-spacing:0.3px;">Studios</span> <small class="abs" style="left:67.6px;top:34px;font-size:13.4px;letter-spacing:0.88px;">est.</small></td>
</tr>
<tr class="two">
<td class="c1"><i class="abs" style="left:9.52px;top:21px;font-size:17.5px;transform:scaleX(1.07);letter-spacing:0px">#10</i></td>
<td class="c2"><a><span class="abs" style="left:19.6px;top:11px;font-size:15.7px;letter-spacing:0.61px;">Redeem the</span> <span class="abs" style="left:37.25px;top:34px;font-size:15.7px;letter-spacing:0.95px;">Legacy</span></a></td>
<td class="c3"><span class="abs" style="left:8.23px;top:21px;font-size:17.2px;letter-spacing:-0.01px;">$7k</span></td>
<td class="c4"><span class="abs" style="left:7.64px;top:12px;font-size:15.8px;letter-spacing:0.21px;">Harbour</span> <span class="abs" style="left:8.19px;top:34px;font-size:15.8px;letter-spacing:0.3px;">Studios</span> <small class="abs" style="left:67.6px;top:34px;font-size:13.4px;letter-spacing:0.88px;">est.</small></td>
</tr>
</tbody></table></section>
<section class="tcard" style="left:1229.3px">
<h3><span class="abs" style="left:14.54px;top:17px;font-size:18.4px;letter-spacing:-0.52px;">Asia</span></h3>
<table><thead><tr>
<th class="c1"><span class="abs" style="left:9.58px;top:8px;font-size:14.9px;transform:scaleX(1.38);transform-origin:0 50%;">#</span></th>
<th class="c2"><span class="abs" style="left:8.5px;top:8px;font-size:14.9px;letter-spacing:-0.03px;">GAME</span></th>
<th class="c3"><span class="abs" style="left:7.43px;top:8px;font-size:14.9px;letter-spacing:-0.39px;">REVENUE</span></th>
<th class="c4"><span class="abs" style="left:9.53px;top:8px;font-size:14.9px;letter-spacing:-0.3px;">PUBLISHER</span></th>
</tr></thead><tbody>
<tr class="two top t1">
<td class="c1"><span></span><i class="abs" style="left:12.04px;top:21px;font-size:17.5px;transform:scaleX(0.98);letter-spacing:0px">#1</i></td>
<td class="c2"><a><span class="abs" style="left:35.75px;top:11px;font-size:15.7px;letter-spacing:0.62px;">Premier</span> <span class="abs" style="left:22.9px;top:34px;font-size:15.7px;letter-spacing:0.67px;">Football 87</span></a></td>
<td class="c3"><span class="abs" style="left:8.23px;top:21px;font-size:17.2px;letter-spacing:-0.75px;">$15k</span></td>
<td class="c4"><span class="abs" style="left:8.5px;top:12px;font-size:15.8px;letter-spacing:-0.5px;">The Hydra</span> <span class="abs" style="left:7.64px;top:34px;font-size:15.8px;letter-spacing:-0.34px;">Flash</span></td>
</tr>
<tr class="top t2">
<td class="c1"><span></span><i class="abs" style="left:11.99px;top:20px;font-size:17.5px;transform:scaleX(1.17);letter-spacing:0px">#2</i></td>
<td class="c2"><a class="abs" style="left:8.4px;top:22px;font-size:15.7px;letter-spacing:0.62px;">F!ght 3</a></td>
<td class="c3"><span class="abs" style="left:8.23px;top:20px;font-size:17.2px;letter-spacing:-0.75px;">$11k</span></td>
<td class="c4"><span class="abs" style="left:8.5px;top:11px;font-size:15.8px;letter-spacing:-0.5px;">The Hydra</span> <span class="abs" style="left:7.64px;top:33px;font-size:15.8px;letter-spacing:-0.34px;">Flash</span></td>
</tr>
<tr class="top t3">
<td class="c1"><span></span><i class="abs" style="left:11.99px;top:20px;font-size:17.5px;transform:scaleX(1.16);letter-spacing:0px">#3</i></td>
<td class="c2"><a class="abs" style="left:8.4px;top:22px;font-size:15.7px;letter-spacing:0.31px;">PuzzleMe</a></td>
<td class="c3"><span class="abs" style="left:8.23px;top:20px;font-size:17.2px;letter-spacing:-0.75px;">$11k</span></td>
<td class="c4"><span class="abs" style="left:8.5px;top:11px;font-size:15.8px;letter-spacing:-0.5px;">The Hydra</span> <span class="abs" style="left:7.64px;top:33px;font-size:15.8px;letter-spacing:-0.34px;">Flash</span></td>
</tr>
<tr>
<td class="c1"><i class="abs" style="left:9.48px;top:20px;font-size:17.5px;transform:scaleX(1.23);letter-spacing:0px">#4</i></td>
<td class="c2"><a class="abs" style="left:8.4px;top:22px;font-size:15.7px;letter-spacing:0.06px;">Rally 2</a></td>
<td class="c3"><span class="abs" style="left:8.23px;top:20px;font-size:17.2px;letter-spacing:-0.75px;">$11k</span></td>
<td class="c4"><span class="abs" style="left:8.5px;top:11px;font-size:15.8px;letter-spacing:-0.5px;">The Hydra</span> <span class="abs" style="left:7.64px;top:33px;font-size:15.8px;letter-spacing:-0.34px;">Flash</span></td>
</tr>
<tr>
<td class="c1"><i class="abs" style="left:9.49px;top:20px;font-size:17.5px;transform:scaleX(1.2);letter-spacing:0px">#5</i></td>
<td class="c2"><a class="abs" style="left:8.4px;top:22px;font-size:15.7px;letter-spacing:-0.22px;">WGT 1987</a></td>
<td class="c3"><span class="abs" style="left:8.23px;top:20px;font-size:17.2px;letter-spacing:0.24px;">$9k</span></td>
<td class="c4"><span class="abs" style="left:8.5px;top:11px;font-size:15.8px;letter-spacing:-0.5px;">The Hydra</span> <span class="abs" style="left:7.64px;top:33px;font-size:15.8px;letter-spacing:-0.34px;">Flash</span></td>
</tr>
<tr>
<td class="c1"><i class="abs" style="left:9.48px;top:20px;font-size:17.5px;transform:scaleX(1.21);letter-spacing:0px">#6</i></td>
<td class="c2"><a class="abs" style="left:8.4px;top:22px;font-size:15.7px;letter-spacing:0.59px;">F!ght 2</a></td>
<td class="c3"><span class="abs" style="left:8.23px;top:20px;font-size:17.2px;letter-spacing:0.24px;">$9k</span></td>
<td class="c4"><span class="abs" style="left:8.5px;top:11px;font-size:15.8px;letter-spacing:-0.5px;">The Hydra</span> <span class="abs" style="left:7.64px;top:33px;font-size:15.8px;letter-spacing:-0.34px;">Flash</span></td>
</tr>
<tr>
<td class="c1"><i class="abs" style="left:9.49px;top:20px;font-size:17.5px;transform:scaleX(1.16);letter-spacing:0px">#7</i></td>
<td class="c2"><a class="abs" style="left:8.4px;top:22px;font-size:15.7px;letter-spacing:0.6px;">Vector IX</a></td>
<td class="c3"><span class="abs" style="left:8.23px;top:20px;font-size:17.2px;letter-spacing:0.24px;">$9k</span></td>
<td class="c4"><span class="abs" style="left:7.64px;top:11px;font-size:15.8px;letter-spacing:0.5px;">Nordic</span> <span class="abs" style="left:7.64px;top:33px;font-size:15.8px;letter-spacing:-0.5px;">Play</span> <small class="abs" style="left:42.1px;top:33px;font-size:13.4px;letter-spacing:0.88px;">est.</small></td>
</tr>
<tr class="two">
<td class="c1"><i class="abs" style="left:9.48px;top:21px;font-size:17.5px;transform:scaleX(1.22);letter-spacing:0px">#8</i></td>
<td class="c2"><a><span class="abs" style="left:42.55px;top:11px;font-size:15.7px;letter-spacing:1px;">World</span> <span class="abs" style="left:21.75px;top:34px;font-size:15.7px;letter-spacing:1.23px;">Motorsport</span></a></td>
<td class="c3"><span class="abs" style="left:8.23px;top:21px;font-size:17.2px;letter-spacing:-0.01px;">$7k</span></td>
<td class="c4"><span class="abs" style="left:8.5px;top:12px;font-size:15.8px;letter-spacing:-0.5px;">The Hydra</span> <span class="abs" style="left:7.64px;top:34px;font-size:15.8px;letter-spacing:-0.34px;">Flash</span></td>
</tr>
<tr class="two">
<td class="c1"><i class="abs" style="left:9.49px;top:21px;font-size:17.5px;transform:scaleX(1.2);letter-spacing:0px">#9</i></td>
<td class="c2"><a><span class="abs" style="left:36px;top:11px;font-size:15.7px;letter-spacing:0.92px;">Ancient</span> <span class="abs" style="left:38.9px;top:34px;font-size:15.7px;letter-spacing:0.69px;">Sunset</span></a></td>
<td class="c3"><span class="abs" style="left:8.23px;top:21px;font-size:17.2px;letter-spacing:-0.01px;">$7k</span></td>
<td class="c4"><span class="abs" style="left:7.64px;top:12px;font-size:15.8px;letter-spacing:0.21px;">Harbour</span> <span class="abs" style="left:8.19px;top:34px;font-size:15.8px;letter-spacing:0.3px;">Studios</span> <small class="abs" style="left:67.6px;top:34px;font-size:13.4px;letter-spacing:0.88px;">est.</small></td>
</tr>
<tr class="two">
<td class="c1"><i class="abs" style="left:9.52px;top:21px;font-size:17.5px;transform:scaleX(1.07);letter-spacing:0px">#10</i></td>
<td class="c2"><a><span class="abs" style="left:19.6px;top:11px;font-size:15.7px;letter-spacing:0.61px;">Redeem the</span> <span class="abs" style="left:37.25px;top:34px;font-size:15.7px;letter-spacing:0.95px;">Legacy</span></a></td>
<td class="c3"><span class="abs" style="left:8.23px;top:21px;font-size:17.2px;letter-spacing:-0.01px;">$7k</span></td>
<td class="c4"><span class="abs" style="left:7.64px;top:12px;font-size:15.8px;letter-spacing:0.21px;">Harbour</span> <span class="abs" style="left:8.19px;top:34px;font-size:15.8px;letter-spacing:0.3px;">Studios</span> <small class="abs" style="left:67.6px;top:34px;font-size:13.4px;letter-spacing:0.88px;">est.</small></td>
</tr>
</tbody></table></section>
</main>
<section class="card2"><div class="shead">
<svg class="abs" style="left:17.9px;top:14px" width="20" height="20" viewBox="0 0 24 24" fill="none" stroke="#b4591a" stroke-width="2" stroke-linecap="round" stroke-linejoin="round"><rect x="2" y="6" width="20" height="12" rx="2"/><path d="M6 12h4M8 10v4M15 13h.01M18 11h.01"/></svg>
<h2 class="abs h2" style="left:47.03px;top:15px;font-size:17.3px;letter-spacing:0.85px;">Charts by platform</h2>
<svg class="abs" style="left:1586px;top:15.4px" width="20" height="20" viewBox="0 0 24 24" fill="none" stroke="#3f4a63" stroke-width="2" stroke-linecap="round" stroke-linejoin="round"><path d="M6 9l6 6 6-6"/></svg>
</div></section>
<div class="badge"><span class="abs" style="left:6.79px;top:3px;font-size:12.4px;letter-spacing:-0.75px;">15</span></div>
<div class="fun"><svg width="19.4" height="19.4" viewBox="0 0 24 24" fill="none" stroke="#111" stroke-width="2" stroke-linecap="round" stroke-linejoin="round"><path d="M9 18V5l12-2v13"/><circle cx="6" cy="18" r="3"/><circle cx="18" cy="16" r="3"/></svg><span class="abs" style="left:38.47px;top:9px;font-size:14.1px;letter-spacing:0.2px;">Fun</span></div>
</div>
</body>
</html>
